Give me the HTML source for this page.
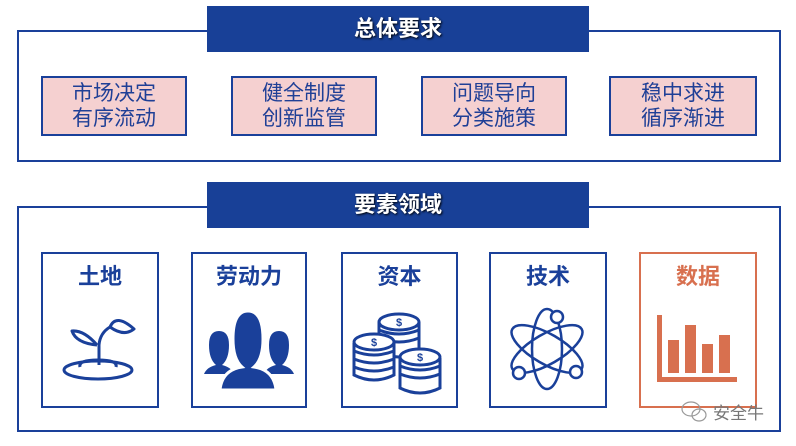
<!DOCTYPE html><html><head><meta charset="utf-8"><style>
body{margin:0;width:796px;height:446px;background:#fff;position:relative;overflow:hidden;font-family:"Liberation Sans","Noto Sans CJK SC",sans-serif}
.a{position:absolute;box-sizing:border-box}
.box{border:2px solid #1a409a}
.bar{background:#184097;color:#fff;font-weight:bold;font-size:22px;text-align:center;text-shadow:1px 1px 2px #000}
.pk{background:#f5d0d0;border:2px solid #1a409a;color:#1f3f96;font-size:21px;line-height:25px;text-align:center;padding-top:3px;font-family:"Liberation Sans","WenQuanYi Zen Hei",sans-serif}
.cd{border:2px solid #1a409a;color:#1a409a;font-weight:bold;font-size:22px;text-align:center;padding-top:5px}
svg{position:absolute}
</style></head><body>
<div class="a box" style="left:17px;top:30px;width:764px;height:132px"></div>
<div class="a bar" style="left:207px;top:6px;width:382px;height:46px;line-height:46px">总体要求</div>
<div class="a pk" style="left:41px;top:76px;width:146px;height:60px">市场决定<br>有序流动</div>
<div class="a pk" style="left:231px;top:76px;width:146px;height:60px">健全制度<br>创新监管</div>
<div class="a pk" style="left:421px;top:76px;width:146px;height:60px">问题导向<br>分类施策</div>
<div class="a pk" style="left:609px;top:76px;width:148px;height:60px">稳中求进<br>循序渐进</div>
<div class="a box" style="left:17px;top:206px;width:764px;height:226px"></div>
<div class="a bar" style="left:207px;top:182px;width:382px;height:46px;line-height:46px">要素领域</div>
<div class="a cd" style="left:41px;top:252px;width:118px;height:156px">土地</div>
<div class="a cd" style="left:191px;top:252px;width:116px;height:156px">劳动力</div>
<div class="a cd" style="left:341px;top:252px;width:117px;height:156px">资本</div>
<div class="a cd" style="left:489px;top:252px;width:118px;height:156px">技术</div>
<div class="a cd" style="left:639px;top:252px;width:118px;height:156px;border-color:#d8704f;color:#d8704f">数据</div>
<svg width="796" height="446" style="left:0;top:0">
<g fill="none" stroke="#1a409a" stroke-width="3" stroke-linejoin="round">
<ellipse cx="98" cy="370" rx="34" ry="9"/><path d="M80 367q-2-7 18-7q20 0 18 7"/>
<path d="M99 365V345Q100 333 110 327"/>
<path d="M97 345Q84 330 72 331Q76 343 97 345"/>
<path d="M110 327Q116 313 134 329Q124 337 110 327"/>
</g>
<g fill="#1a409a">
<path d="M204 374q3-7 12-9q-7-6-7-20q0-14 10-14q10 0 10 14q0 14-7 20q9 2 12 9z"/>
<path d="M264 374q3-7 12-9q-7-6-7-20q0-14 10-14q10 0 10 14q0 14-7 20q9 2 12 9z"/>
<path d="M220 390q2-20 22-23q-9-8-9-28q0-28 15-28q15 0 15 28q0 20-9 28q20 3 22 23z" stroke="#fff" stroke-width="3"/>
</g>
<g stroke="#1a409a" stroke-width="3" fill="#fff">
<path d="M379 322v30q20 10 40 0v-30M379 330q20 8 40 0M379 338q20 8 40 0"/><ellipse cx="399" cy="322" rx="20" ry="8"/>
<path d="M354 343v32q20 10 40 0v-32M354 351q20 8 40 0M354 359q20 8 40 0M354 367q20 8 40 0"/><ellipse cx="374" cy="342" rx="20" ry="8"/>
<path d="M400 358v30q20 10 40 0v-30M400 366q20 8 40 0M400 374q20 8 40 0"/><ellipse cx="420" cy="357" rx="20" ry="8"/>
</g>
<g fill="#1a409a" font-size="11" font-weight="bold" font-family="Liberation Sans" text-anchor="middle"><text x="399" y="326">$</text><text x="374" y="346">$</text><text x="420" y="361">$</text></g>
<g fill="none" stroke="#1a409a" stroke-width="2.5">
<ellipse cx="547" cy="349" rx="15" ry="40"/>
<ellipse cx="547" cy="349" rx="15" ry="40" transform="rotate(60 547 349)"/>
<ellipse cx="547" cy="349" rx="15" ry="40" transform="rotate(-60 547 349)"/>
<circle cx="557" cy="317" r="6" fill="#fff"/><circle cx="519" cy="373" r="6" fill="#fff"/><circle cx="576" cy="372" r="6" fill="#fff"/>
</g>
<g fill="#d8704f">
<rect x="657" y="315" width="5" height="67"/><rect x="657" y="377" width="80" height="5"/>
<rect x="668" y="340" width="11" height="33"/><rect x="685" y="325" width="11" height="48"/><rect x="702" y="344" width="11" height="29"/><rect x="719" y="335" width="11" height="38"/>
</g>
<g fill="none" stroke="#999" stroke-width="1.2"><ellipse cx="691" cy="409" rx="9" ry="7"/><ellipse cx="699" cy="415" rx="7" ry="6"/></g>
<text x="713" y="419" font-size="17" fill="#777" font-family="Noto Sans CJK SC">安全牛</text>
</svg>
</body></html>
